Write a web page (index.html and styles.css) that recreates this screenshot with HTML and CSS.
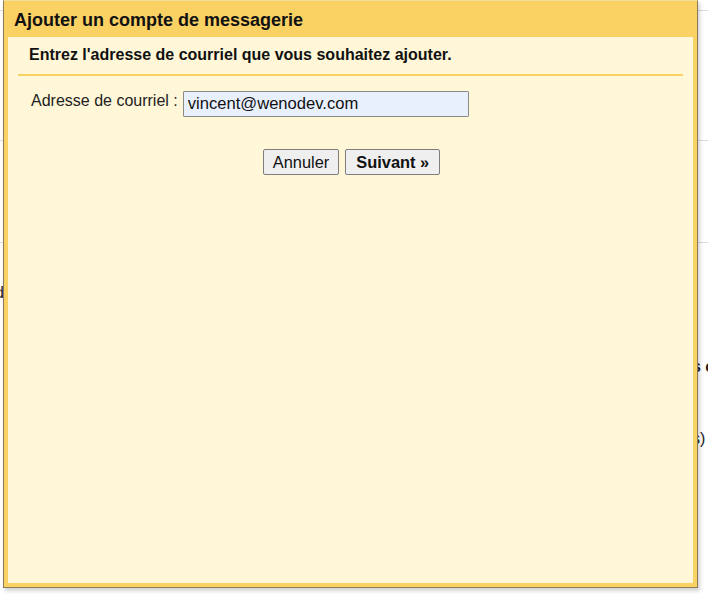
FILE: index.html
```html
<!DOCTYPE html>
<html lang="fr">
<head>
<meta charset="utf-8">
<title>Ajouter un compte de messagerie</title>
<link rel="stylesheet" href="styles.css">
</head>
<body>
<div class="page">
  <div class="bg-line l1"></div>
  <div class="bg-line l2"></div>
  <div class="bg-line l3"></div>
  <span class="bg-glyph g1">d</span>
  <span class="bg-glyph g2">s c</span>
  <span class="bg-glyph g3">s)</span>
</div>
<div class="dialog">
  <div class="dialog-inner">
    <div class="title">Ajouter un compte de messagerie</div>
    <div class="body">
      <div class="subtitle">Entrez l'adresse de courriel que vous souhaitez ajouter.</div>
      <div class="rule"></div>
      <div class="field">
        <label class="label" for="email">Adresse de courriel :</label>
        <input class="input" id="email" type="text" value="vincent@wenodev.com">
      </div>
      <div class="actions">
        <button class="btn">Annuler</button>
        <button class="btn btn-primary">Suivant »</button>
      </div>
    </div>
  </div>
</div>
</body>
</html>
```
FILE: styles.css
```css
html, body {
  margin: 0;
  padding: 0;
  width: 708px;
  height: 594px;
  overflow: hidden;
  background: #ffffff;
  font-family: "Liberation Sans", Arial, sans-serif;
}
.page {
  position: relative;
  width: 708px;
  height: 594px;
}
.bg-line {
  position: absolute;
  height: 1px;
  background: #dcdcdc;
}
.l1 { left: 0; width: 708px; top: 10px; }
.l2 { left: 0; width: 708px; top: 140px; }
.l3 { left: 0; width: 708px; top: 242px; }
.bg-glyph {
  position: absolute;
  font-size: 16px;
  color: #222;
  white-space: nowrap;
}
.g1 { left: -5px; top: 284px; }
.g2 { left: 692px; top: 358px; font-weight: bold; }
.g3 { left: 692px; top: 430px; }

.dialog {
  position: absolute;
  left: 3px;
  top: 0;
  width: 695px;
  height: 588px;
  box-sizing: border-box;
  border: 1px solid #8c7b58;
  border-top-color: #f3dd9a;
  box-shadow: 2px 3px 4px rgba(0,0,0,0.18);
  background: #fff7d7;
}
.dialog-inner {
  box-sizing: border-box;
  height: 100%;
  border: 4px solid #fad163;
  border-top-width: 3px;
  background: #fff7d7;
  display: flex;
  flex-direction: column;
}
.title {
  background: #fad163;
  height: 33px;
  line-height: 33px;
  padding-left: 6px;
  font-size: 18px;
  font-weight: bold;
  color: #111;
}
.body {
  padding: 0 10px 0 10px;
  display: flex;
  flex-direction: column;
}
.subtitle {
  font-size: 16px;
  font-weight: bold;
  color: #111;
  padding: 9px 0 0 11px;
  height: 28px;
  box-sizing: border-box;
  height: 37px;
}
.rule {
  height: 2px;
  background: #fad163;
}
.field {
  display: flex;
  align-items: flex-start;
  padding: 15px 0 0 13px;
  gap: 5px;
}
.label {
  font-size: 16px;
  color: #222;
  line-height: 20px;
}
.input {
  box-sizing: border-box;
  width: 286px;
  height: 26px;
  margin: 0;
  padding: 0 4px;
  border: 1px solid #8a8a8a;
  border-radius: 1px;
  background: #e8f0fe;
  font-family: "Liberation Sans", Arial, sans-serif;
  font-size: 16.6px;
  color: #111;
  outline: none;
}
.actions {
  display: flex;
  justify-content: center;
  gap: 6px;
  padding: 32px 0 0 2px;
}
.btn {
  box-sizing: border-box;
  height: 26px;
  padding: 0 9px;
  border: 1px solid #7e7e7e;
  border-radius: 2px;
  background: #efefef;
  font-family: "Liberation Sans", Arial, sans-serif;
  font-size: 16.4px;
  color: #111;
}
.btn-primary {
  font-weight: bold;
  padding: 0 10px;
}
```
